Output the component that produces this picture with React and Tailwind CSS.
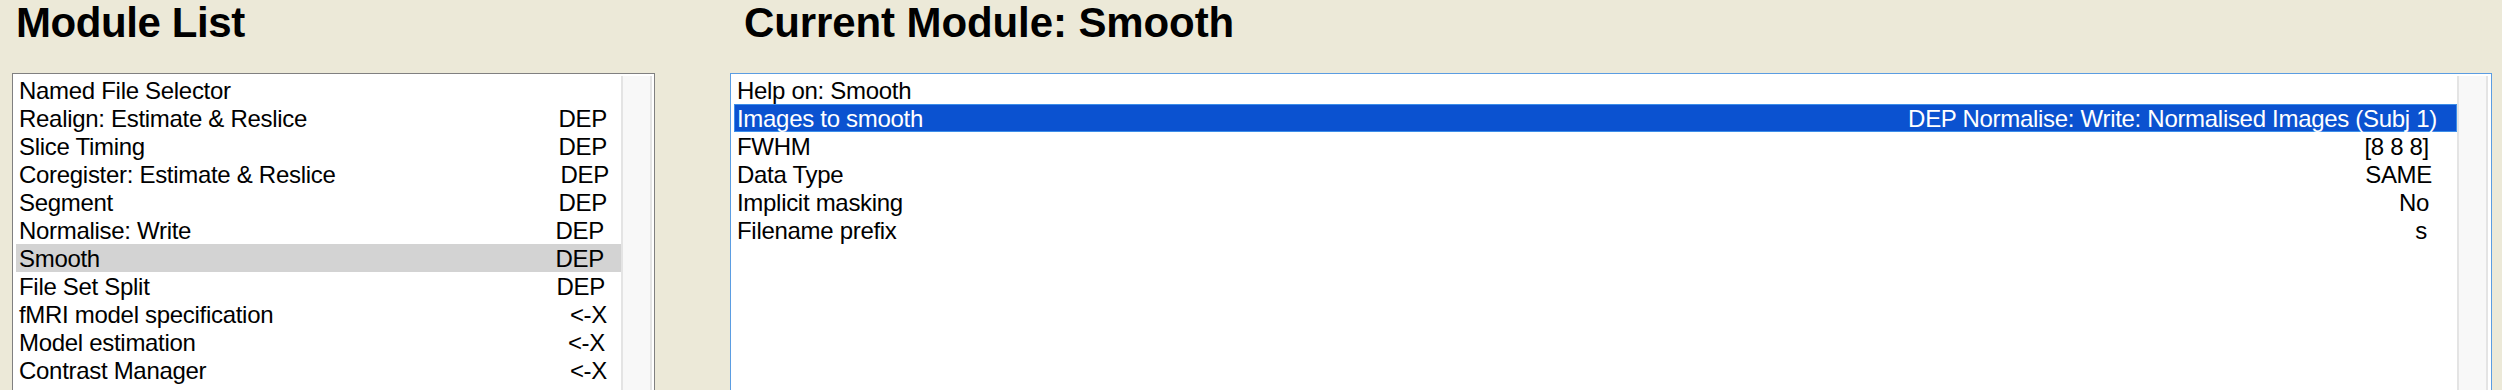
import React from "react";

const leftRows = [
  ["Named File Selector", "", 0],
  ["Realign: Estimate & Reslice", "DEP", 0],
  ["Slice Timing", "DEP", 0],
  ["Coregister: Estimate & Reslice", "DEP", -2],
  ["Segment", "DEP", 0],
  ["Normalise: Write", "DEP", 3],
  ["Smooth", "DEP", 3],
  ["File Set Split", "DEP", 2],
  ["fMRI model specification", "<-X", 0],
  ["Model estimation", "<-X", 2],
  ["Contrast Manager", "<-X", 0],
];

const rightRows = [
  ["Help on: Smooth", ""],
  ["Images to smooth", "DEP Normalise: Write: Normalised Images (Subj 1)"],
  ["FWHM", "[8 8 8]"],
  ["Data Type", "SAME"],
  ["Implicit masking", "No"],
  ["Filename prefix", "s"],
];

function Scrollbar() {
  return (
    <div className="w-[31px] shrink-0 border-l-2 border-r-2 border-[#e4e4e4] bg-[#f8f8f8]" />
  );
}

export default function App() {
  return (
    <div
      className="flex h-[390px] w-[2502px] overflow-hidden bg-[#ece9d8] text-black"
      style={{ fontFamily: '"Liberation Sans", Arial, sans-serif' }}
    >
      {/* Left column */}
      <div className="ml-[12px] flex w-[643px] shrink-0 flex-col">
        <div className="pl-[4px] pt-[2px] text-[42px] font-bold leading-[42px] tracking-[-0.4px]">
          Module List
        </div>
        <div className="mt-[29px] flex h-[340px] shrink-0 border border-[#808080] bg-white pl-[3px] pr-[2px] pt-[2px]">
          <div className="flex flex-1 flex-col">
            {leftRows.map(([name, val, off], i) => (
              <div
                key={i}
                className={
                  "flex h-[28px] shrink-0 items-center justify-between pl-[3px] pt-[2px] text-[24px] leading-[26px] tracking-[-0.3px] " +
                  (name === "Smooth" ? "bg-[#d3d3d3]" : "")
                }
              >
                <span>{name}</span>
                <span style={{ marginRight: 14 + off }}>{val}</span>
              </div>
            ))}
          </div>
          <Scrollbar />
        </div>
      </div>

      {/* Right column */}
      <div className="ml-[75px] flex w-[1762px] shrink-0 flex-col">
        <div className="pl-[14px] pt-[2px] text-[42px] font-bold leading-[42px] tracking-[-0.1px]">
          Current Module: Smooth
        </div>
        <div className="mt-[29px] flex h-[340px] shrink-0 border border-[#5b9de2] bg-white pl-[3px] pr-[3px] pt-[2px]">
          <div className="flex flex-1 flex-col">
            {rightRows.map(([name, val], i) => {
              const sel = i === 1;
              const offs = [0, 0, 8, 5, 8, 10];
              return (
                <div
                  key={i}
                  className={
                    "flex h-[28px] shrink-0 items-center justify-between pt-[2px] text-[24px] leading-[24px] tracking-[-0.3px] " +
                    (sel
                      ? "border border-[#3c8de8] bg-[#0b52d0] pl-[2px] text-white"
                      : "pl-[3px]")
                  }
                >
                  <span>{name}</span>
                  <span style={{ marginRight: (sel ? 19 : 20) + offs[i] }}>{val}</span>
                </div>
              );
            })}
          </div>
          <Scrollbar />
        </div>
      </div>
    </div>
  );
}
